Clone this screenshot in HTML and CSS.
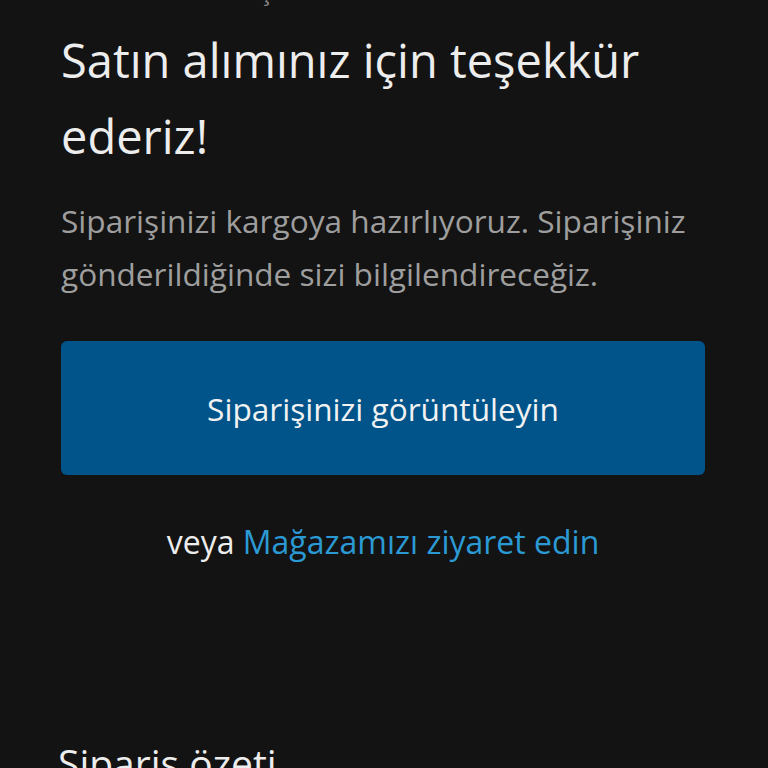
FILE: index.html
```html
<!DOCTYPE html>
<html lang="tr">
<head>
<meta charset="utf-8">
<title>Sipariş onayı</title>
<link rel="stylesheet" href="styles.css">
</head>
<body>
<main class="page">
  <div class="crumb">Ödeme başarılı</div>
  <h1 class="title">Satın alımınız için teşekkür ederiz!</h1>
  <p class="lead">Siparişinizi kargoya hazırlıyoruz. Siparişiniz gönderildiğinde sizi bilgilendireceğiz.</p>
  <a class="btn" href="#">Siparişinizi görüntüleyin</a>
  <p class="alt">veya <a class="link" href="#">Mağazamızı ziyaret edin</a></p>
  <h2 class="summary">Sipariş özeti</h2>
</main>
</body>
</html>
```
FILE: styles.css
```css
html, body {
  margin: 0;
  padding: 0;
  background: #131313;
}
body {
  font-family: "Open Sans", "Noto Sans", sans-serif;
  color: #ebebeb;
  overflow: hidden;
  height: 768px;
}
.page {
  padding: 0 63px 0 61px;
  display: flex;
  flex-direction: column;
}
.crumb {
  font-size: 24px;
  line-height: 30px;
  height: 46px;
  margin-top: -24px;
  padding-left: 83px;
  color: #8a8a8a;
}
.title {
  margin: 0;
  font-weight: 400;
  font-size: 47px;
  line-height: 76px;
  color: #ededed;
}
.lead {
  margin: 20px 0 0;
  font-size: 31.6px;
  line-height: 53px;
  color: #9e9e9e;
}
.btn {
  margin-top: 41px;
  height: 134px;
  border-radius: 6px;
  background: #00548a;
  color: #f2f2f2;
  text-decoration: none;
  font-size: 31.6px;
  display: flex;
  align-items: center;
  justify-content: center;
}
.alt {
  margin: 47px 0 0;
  text-align: center;
  font-size: 32px;
  line-height: 40px;
  color: #ededed;
}
.link {
  color: #2b9ad4;
  text-decoration: none;
}
.summary {
  margin: 176px 0 0 -3px;
  font-weight: 400;
  font-size: 39px;
  line-height: 50px;
  color: #ededed;
}
```
